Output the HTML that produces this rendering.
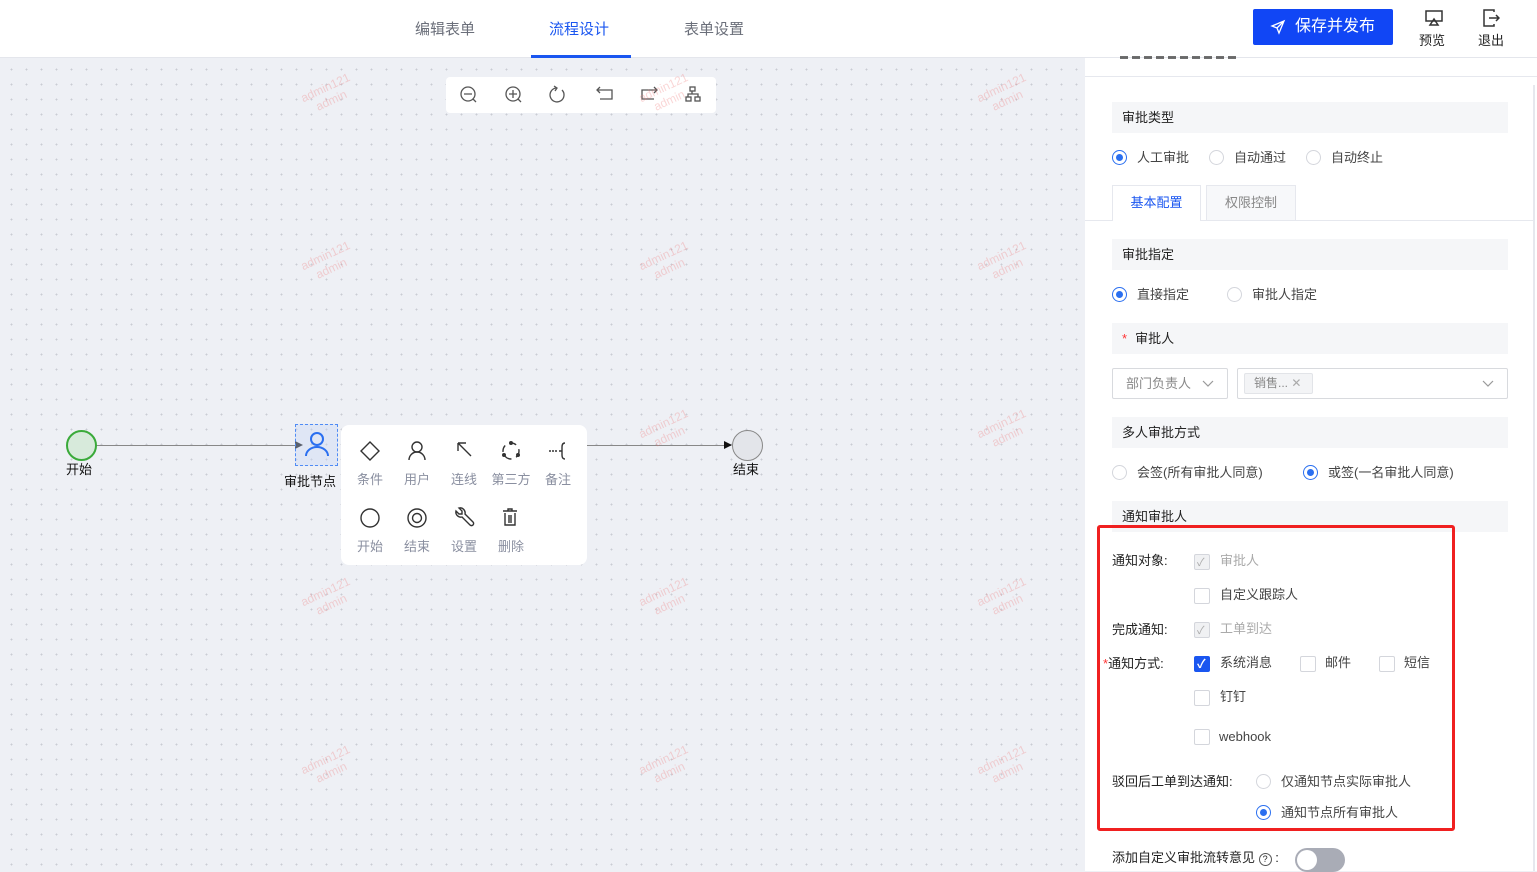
<!DOCTYPE html>
<html><head><meta charset="utf-8"><style>
*{box-sizing:border-box;margin:0;padding:0}
body{width:1537px;height:871px;overflow:hidden;position:relative;font-family:"Liberation Sans","Noto Sans CJK SC",sans-serif;font-size:13px;color:#333;background:#eef0f5}
.abs{position:absolute}
#canvas{left:0;top:58px;width:1085px;height:813px;background-color:#eef0f5;background-image:radial-gradient(circle,#c9ccd4 0.8px,transparent 1px);background-size:15px 15px;background-position:4px 4px}
#hdr{left:0;top:0;width:1537px;height:58px;background:#fff;border-bottom:1px solid #e4e6ec}
.tab{top:18px;font-size:15px;color:#6b6f7a}
.wm{color:rgba(240,120,120,0.3);font-size:12px;transform:rotate(-25deg);line-height:14px;text-align:center}
#panel{left:1085px;top:58px;width:452px;height:813px;background:#fff}
.sec{left:1112px;width:396px;height:31px;background:#f5f6f8;padding-left:10px;line-height:31px;font-size:13px;color:#222}
.radio{width:15px;height:15px;border:1px solid #d4d6dc;border-radius:50%;background:#fff}
.radio.on{border-color:#2a6ff0}
.radio.on::after{content:"";position:absolute;left:3px;top:3px;width:7px;height:7px;border-radius:50%;background:#2a6ff0}
.lbl{font-size:13px;color:#444;line-height:16px}
.cb{width:16px;height:16px;border:1px solid #d4d6dc;border-radius:2px;background:#fff}
.cb.dis{background:#f0f1f3}
.cb.on{background:#1a56f0;border-color:#1a56f0}
.ti{width:40px;text-align:center;font-size:13px;color:#8a8fa0}
</style></head><body>
<div id="canvas" class="abs"></div>
<div id="hdr" class="abs"></div>
<div class="abs tab" style="left:415px">编辑表单</div>
<div class="abs tab" style="left:549px;color:#1a56f0">流程设计</div>
<div class="abs" style="left:531px;top:55px;width:100px;height:3px;background:#1a56f0"></div>
<div class="abs tab" style="left:684px">表单设置</div>
<div class="abs" style="left:1253px;top:9px;width:140px;height:36px;background:#1146f5;border-radius:2px;color:#fff;font-size:16px;line-height:36px;padding-left:42px">保存并发布</div>
<svg class="abs" style="left:1270px;top:19px" width="16" height="16" viewBox="0 0 16 16" fill="none" stroke="#fff" stroke-width="1.3"><path d="M14 2L2 7l5 2 2 5z M7 9l7-7"/></svg>
<svg class="abs" style="left:1424px;top:9px" width="20" height="18" viewBox="0 0 20 18" fill="none" stroke="#333" stroke-width="1.5"><rect x="2" y="2" width="16" height="10"/><path d="M10 10l-4 6h8z"/></svg>
<div class="abs" style="left:1419px;top:30px;font-size:13px;color:#222">预览</div>
<svg class="abs" style="left:1482px;top:9px" width="18" height="18" viewBox="0 0 18 18" fill="none" stroke="#333" stroke-width="1.5"><path d="M12 3V1H2v16h10v-2"/><path d="M7 9h10M14 6l3 3-3 3"/></svg>
<div class="abs" style="left:1478px;top:30px;font-size:13px;color:#222">退出</div>

<div class="abs" style="left:446px;top:77px;width:270px;height:36px;background:#fff;border-radius:4px"></div>
<svg class="abs" style="left:446px;top:77px" width="270" height="36" fill="none" stroke="#555" stroke-width="1.3">
<circle cx="22" cy="17" r="7"/><path d="M18 17h8M27 22l3 3"/>
<circle cx="67" cy="17" r="7"/><path d="M63 17h8M67 13v8M72 22l3 3"/>
<path d="M110 11a7 7 0 1 0 6 2"/><path d="M108 9l3 2-2 3"/>
<path d="M152 13h14v9h-12"/><path d="M154 10l-3 3 3 3"/>
<path d="M210 13h-14v9h12"/><path d="M208 10l3 3-3 3"/>
<rect x="244" y="10" width="5" height="4"/><rect x="240" y="20" width="5" height="4"/><rect x="249" y="20" width="5" height="4"/><path d="M246 14v3M242 20v-3h10v3"/>
</svg>

<div class="abs" style="left:95px;top:445px;width:205px;height:1px;background:#888"></div>
<div class="abs" style="left:566px;top:445px;width:165px;height:1px;background:#888"></div>
<div class="abs" style="left:295px;top:441px;width:0;height:0;border-left:8px solid #111;border-top:4px solid transparent;border-bottom:4px solid transparent"></div>
<div class="abs" style="left:724px;top:441px;width:0;height:0;border-left:8px solid #111;border-top:4px solid transparent;border-bottom:4px solid transparent"></div>
<div class="abs" style="left:66px;top:430px;width:31px;height:31px;border-radius:50%;border:2px solid #3aaa3a;background:#d7eadb"></div>
<div class="abs" style="left:66px;top:459px;font-size:13px;color:#111">开始</div>
<div class="abs" style="left:732px;top:430px;width:31px;height:31px;border-radius:50%;border:1.5px solid #888;background:#e3e5ea"></div>
<div class="abs" style="left:733px;top:459px;font-size:13px;color:#111">结束</div>
<div class="abs" style="left:295px;top:424px;width:43px;height:42px;border:1.5px dashed #4f8bf5;background:rgba(200,215,245,0.4)"></div>
<svg class="abs" style="left:302px;top:429px" width="30" height="30" fill="none" stroke="#2a6ff0" stroke-width="2"><circle cx="15" cy="10" r="6"/><path d="M4 27a11 9 0 0 1 22 0"/></svg>
<div class="abs" style="left:284px;top:471px;font-size:13px;color:#111">审批节点</div>

<div class="abs" style="left:341px;top:425px;width:246px;height:140px;background:#fff;border-radius:8px"></div>
<svg class="abs" style="left:341px;top:425px" width="246" height="110" fill="none" stroke="#333" stroke-width="1.4">
<path d="M29 17l9 9-9 9-9-9z"/>
<circle cx="76" cy="22" r="5"/><path d="M68 35a8 8 0 0 1 16 0"/>
<path d="M117 18l13 13M117 18v8M117 18h8"/>
<circle cx="170" cy="26" r="8" stroke-dasharray="7 5"/><circle cx="170" cy="18" r="1.3" fill="#333"/><circle cx="163" cy="30" r="1.3" fill="#333"/><circle cx="177" cy="30" r="1.3" fill="#333"/>
<path d="M208 26h8" stroke-dasharray="2 1"/><path d="M224 18q-3 0-3 4v8q0 4 3 4M221 26h-3"/>
<circle cx="29" cy="93" r="9"/>
<circle cx="76" cy="93" r="9"/><circle cx="76" cy="93" r="4.5"/>
<path d="M115 86a5 5 0 0 0 6 6l8 8a2 2 0 0 0 3-3l-8-8a5 5 0 0 0-6-6l3 3v3h-3z"/>
<path d="M162 86h14M167 86v-2h4v2M164 88v12h10V88M168 90v8M170 90v8"/>
</svg>
<div class="abs ti" style="left:350px;top:469px">条件</div>
<div class="abs ti" style="left:397px;top:469px">用户</div>
<div class="abs ti" style="left:444px;top:469px">连线</div>
<div class="abs ti" style="left:491px;top:469px">第三方</div>
<div class="abs ti" style="left:538px;top:469px">备注</div>
<div class="abs ti" style="left:350px;top:536px">开始</div>
<div class="abs ti" style="left:397px;top:536px">结束</div>
<div class="abs ti" style="left:444px;top:536px">设置</div>
<div class="abs ti" style="left:491px;top:536px">删除</div>

<div class="abs wm" style="left:302px;top:80px">admin121<br>admin</div>
<div class="abs wm" style="left:640px;top:80px">admin121<br>admin</div>
<div class="abs wm" style="left:978px;top:80px">admin121<br>admin</div>
<div class="abs wm" style="left:302px;top:248px">admin121<br>admin</div>
<div class="abs wm" style="left:640px;top:248px">admin121<br>admin</div>
<div class="abs wm" style="left:978px;top:248px">admin121<br>admin</div>
<div class="abs wm" style="left:640px;top:416px">admin121<br>admin</div>
<div class="abs wm" style="left:978px;top:416px">admin121<br>admin</div>
<div class="abs wm" style="left:302px;top:584px">admin121<br>admin</div>
<div class="abs wm" style="left:640px;top:584px">admin121<br>admin</div>
<div class="abs wm" style="left:978px;top:584px">admin121<br>admin</div>
<div class="abs wm" style="left:302px;top:752px">admin121<br>admin</div>
<div class="abs wm" style="left:640px;top:752px">admin121<br>admin</div>
<div class="abs wm" style="left:978px;top:752px">admin121<br>admin</div>

<div id="panel" class="abs"></div>
<div class="abs" style="left:1085px;top:76px;width:452px;height:1px;background:#e6e8ee"></div>
<div class="abs" style="left:1120px;top:56px;width:120px;height:3px;background:repeating-linear-gradient(90deg,#333 0 8px,transparent 8px 12px);opacity:.7"></div>
<div class="abs" style="left:1533px;top:85px;width:2px;height:786px;background:#e6e8ee"></div>
<div class="sec abs" style="top:102px">审批类型</div>
<div class="abs radio on" style="left:1112px;top:150px"></div><div class="abs lbl" style="left:1137px;top:150px">人工审批</div>
<div class="abs radio" style="left:1209px;top:150px"></div><div class="abs lbl" style="left:1234px;top:150px">自动通过</div>
<div class="abs radio" style="left:1306px;top:150px"></div><div class="abs lbl" style="left:1331px;top:150px">自动终止</div>
<div class="abs" style="left:1085px;top:220px;width:450px;height:1px;background:#e6e8ee"></div>
<div class="abs" style="left:1112px;top:185px;width:89px;height:36px;background:#fff;border:1px solid #e6e8ee;border-bottom:none;color:#1a56f0;text-align:center;line-height:34px">基本配置</div>
<div class="abs" style="left:1206px;top:185px;width:90px;height:35px;background:#f7f8fa;border:1px solid #e6e8ee;border-bottom:none;color:#888;text-align:center;line-height:34px">权限控制</div>
<div class="sec abs" style="top:239px">审批指定</div>
<div class="abs radio on" style="left:1112px;top:287px"></div><div class="abs lbl" style="left:1137px;top:287px">直接指定</div>
<div class="abs radio" style="left:1227px;top:287px"></div><div class="abs lbl" style="left:1252px;top:287px">审批人指定</div>
<div class="sec abs" style="top:323px"><span style="color:#f33;margin-right:8px">*</span>审批人</div>
<div class="abs" style="left:1112px;top:368px;width:116px;height:31px;border:1px solid #d8dade;border-radius:2px;padding-left:13px;line-height:29px;color:#888">部门负责人</div>
<svg class="abs" style="left:1202px;top:378px" width="12" height="10" fill="none" stroke="#999" stroke-width="1.2"><path d="M1 3l5 5 5-5"/></svg>
<div class="abs" style="left:1237px;top:368px;width:271px;height:31px;border:1px solid #d8dade;border-radius:2px"></div>
<div class="abs" style="left:1244px;top:373px;width:69px;height:21px;background:#f3f4f6;border:1px solid #e2e4e8;border-radius:2px;font-size:12px;color:#888;line-height:19px;padding-left:9px">销售... <span style="color:#aaa">✕</span></div>
<svg class="abs" style="left:1482px;top:378px" width="12" height="10" fill="none" stroke="#999" stroke-width="1.2"><path d="M1 3l5 5 5-5"/></svg>
<div class="sec abs" style="top:417px">多人审批方式</div>
<div class="abs radio" style="left:1112px;top:465px"></div><div class="abs lbl" style="left:1137px;top:465px">会签(所有审批人同意)</div>
<div class="abs radio on" style="left:1303px;top:465px"></div><div class="abs lbl" style="left:1328px;top:465px">或签(一名审批人同意)</div>
<div class="sec abs" style="top:501px;height:31px">通知审批人</div>

<div class="abs" style="left:1097px;top:525px;width:358px;height:306px;border:3px solid #f02020;border-radius:3px"></div>
<div class="abs lbl" style="left:1112px;top:553px;color:#222">通知对象:</div>
<div class="abs cb dis" style="left:1194px;top:554px"></div><div class="abs" style="left:1197px;top:554px;color:#aaa;font-size:11px">✓</div><div class="abs lbl" style="left:1220px;top:553px;color:#aaa">审批人</div>
<div class="abs cb" style="left:1194px;top:588px"></div><div class="abs lbl" style="left:1220px;top:587px">自定义跟踪人</div>
<div class="abs lbl" style="left:1112px;top:622px;color:#222">完成通知:</div>
<div class="abs cb dis" style="left:1194px;top:622px"></div><div class="abs" style="left:1197px;top:622px;color:#aaa;font-size:11px">✓</div><div class="abs lbl" style="left:1220px;top:621px;color:#aaa">工单到达</div>
<div class="abs lbl" style="left:1103px;top:656px;color:#222"><span style="color:#f33">*</span>通知方式:</div>
<div class="abs cb on" style="left:1194px;top:656px"></div><div class="abs" style="left:1197px;top:655px;color:#fff;font-size:12px;font-weight:bold">✓</div><div class="abs lbl" style="left:1220px;top:655px">系统消息</div>
<div class="abs cb" style="left:1300px;top:656px"></div><div class="abs lbl" style="left:1325px;top:655px">邮件</div>
<div class="abs cb" style="left:1379px;top:656px"></div><div class="abs lbl" style="left:1404px;top:655px">短信</div>
<div class="abs cb" style="left:1194px;top:690px"></div><div class="abs lbl" style="left:1220px;top:689px">钉钉</div>
<div class="abs cb" style="left:1194px;top:729px"></div><div class="abs lbl" style="left:1219px;top:729px">webhook</div>
<div class="abs lbl" style="left:1112px;top:774px;color:#222">驳回后工单到达通知:</div>
<div class="abs radio" style="left:1256px;top:774px"></div><div class="abs lbl" style="left:1281px;top:774px">仅通知节点实际审批人</div>
<div class="abs radio on" style="left:1256px;top:805px"></div><div class="abs lbl" style="left:1281px;top:805px">通知节点所有审批人</div>
<div class="abs lbl" style="left:1112px;top:850px;color:#222">添加自定义审批流转意见 <span style="display:inline-block;width:13px;height:13px;border:1px solid #555;border-radius:50%;font-size:9px;text-align:center;line-height:11px">?</span> :</div>
<div class="abs" style="left:1295px;top:848px;width:50px;height:24px;border-radius:12px;background:#a9acb6"></div>
<div class="abs" style="left:1297px;top:850px;width:20px;height:20px;border-radius:50%;background:#fff"></div>
</body></html>
